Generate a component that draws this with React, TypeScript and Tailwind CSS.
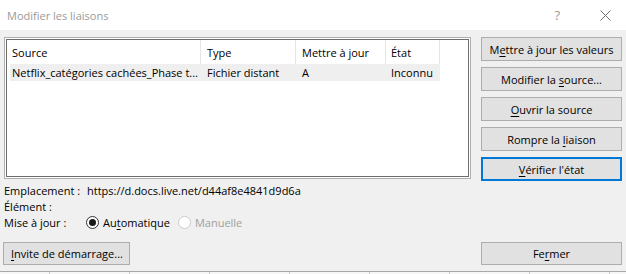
import React from 'react';

const font = { fontFamily: '"Open Sans", "Noto Sans", sans-serif' };

function Key({ before, k, after }: { before?: string; k: string; after?: string }) {
  return (
    <span className="whitespace-pre">
      {before}
      <span className="underline underline-offset-[2px]">{k}</span>
      {after}
    </span>
  );
}

function DlgButton({ children, focused }: { children: React.ReactNode; focused?: boolean }) {
  return (
    <div
      className={`h-[24px] flex items-center justify-center bg-[#e1e1e1] text-black ${
        focused ? 'border-2 border-[#0078d7]' : 'border border-[#adadad]'
      }`}
    >
      {children}
    </div>
  );
}

export default function App() {
  return (
    <div className="w-[626px] h-[274px] bg-[#f0f0f0] overflow-hidden text-[11px] text-black leading-none" style={font}>
      {/* Title bar */}
      <div className="h-[30px] bg-white flex items-center pl-[7px] pr-[12px]">
        <span className="text-[11px] text-[#9a9a9a] flex-1">Modifier les liaisons</span>
        <span className="text-[13px] text-[#999] mr-[40px]">?</span>
        <svg width="11" height="11" viewBox="0 0 11 11" className="mr-[3px]">
          <path d="M0.5 0.5 L10.5 10.5 M10.5 0.5 L0.5 10.5" stroke="#6d6d6d" strokeWidth="1" />
        </svg>
      </div>

      {/* Links list + actions */}
      <div className="flex pt-[7px] pl-[4px]">
        <div className="w-[467px] h-[142px] border border-[#b0b0b0] p-px bg-white">
          <div className="h-full border border-[#6e6e6e] bg-white">
            <div className="flex h-[24px] items-center">
              <div className="w-[194px] h-full flex items-center pl-[5px] border-r border-[#e5e5e5]">Source</div>
              <div className="w-[95px] h-full flex items-center pl-[6px] border-r border-[#e5e5e5]">Type</div>
              <div className="w-[90px] h-full flex items-center pl-[6px] border-r border-[#e5e5e5]">Mettre à jour</div>
              <div className="w-[54px] h-full flex items-center pl-[5px] border-r border-[#e5e5e5]">État</div>
            </div>
            <div className="flex h-[17px] items-center ml-[3px] w-[430px] bg-[#efefef]">
              <div className="w-[191px] pl-[2px] whitespace-nowrap">Netflix_catégories cachées_Phase t...</div>
              <div className="w-[95px] pl-[6px]">Fichier distant</div>
              <div className="w-[90px] pl-[6px]">A</div>
              <div className="w-[54px] pl-[5px]">Inconnu</div>
            </div>
          </div>
        </div>

        <div className="ml-[10px] w-[141px] flex flex-col gap-[6px]">
          <DlgButton><Key before="M" k="e" after="ttre à jour les valeurs" /></DlgButton>
          <DlgButton><Key before="Modifier la " k="s" after="ource..." /></DlgButton>
          <DlgButton><Key k="O" after="uvrir la source" /></DlgButton>
          <DlgButton><Key before="Rompre la " k="l" after="iaison" /></DlgButton>
          <DlgButton focused><Key k="V" after="érifier l'état" /></DlgButton>
        </div>
      </div>

      {/* Details */}
      <div className="mt-[1px] pl-[4px]">
        <div className="h-[16px] flex items-center">
          <span className="w-[83px]">Emplacement :</span>
          <span>https://d.docs.live.net/d44af8e4841d9d6a</span>
        </div>
        <div className="h-[16px] flex items-center">Élément :</div>
        <div className="h-[17px] flex items-center">
          <span className="w-[82px]">Mise à jour :</span>
          <span className="w-[13px] h-[13px] rounded-full border border-[#333] bg-white flex items-center justify-center">
            <span className="w-[7px] h-[7px] rounded-full bg-[#1a1a1a]" />
          </span>
          <span className="ml-[4px]"><Key before="Au" k="t" after="omatique" /></span>
          <span className="ml-[8px] w-[13px] h-[13px] rounded-full border border-[#cccccc] bg-white" />
          <span className="ml-[4px] text-[#a0a0a0]">Manuelle</span>
        </div>
      </div>

      {/* Footer buttons */}
      <div className="mt-[11px] flex justify-between pl-[3px] pr-[4px]">
        <div className="w-[127px] h-[23px] flex items-center bg-[#e1e1e1] border border-[#adadad] pl-[7px]">
          <Key k="I" after="nvite de démarrage..." />
        </div>
        <div className="w-[141px] h-[23px] flex items-center justify-center bg-[#e1e1e1] border border-[#adadad]">
          <Key before="Fe" k="r" after="mer" />
        </div>
      </div>

      {/* Spreadsheet column header peeking out below */}
      <div className="mt-[6px] h-[3px] border-t border-[#a8a8a8] bg-[#f7f7f7] flex">
        {[50, 80, 80, 80, 80, 80, 80, 80].map((w, i) => (
          <div key={i} className="h-full border-r border-[#c8c8c8] shrink-0" style={{ width: w }} />
        ))}
      </div>
    </div>
  );
}
